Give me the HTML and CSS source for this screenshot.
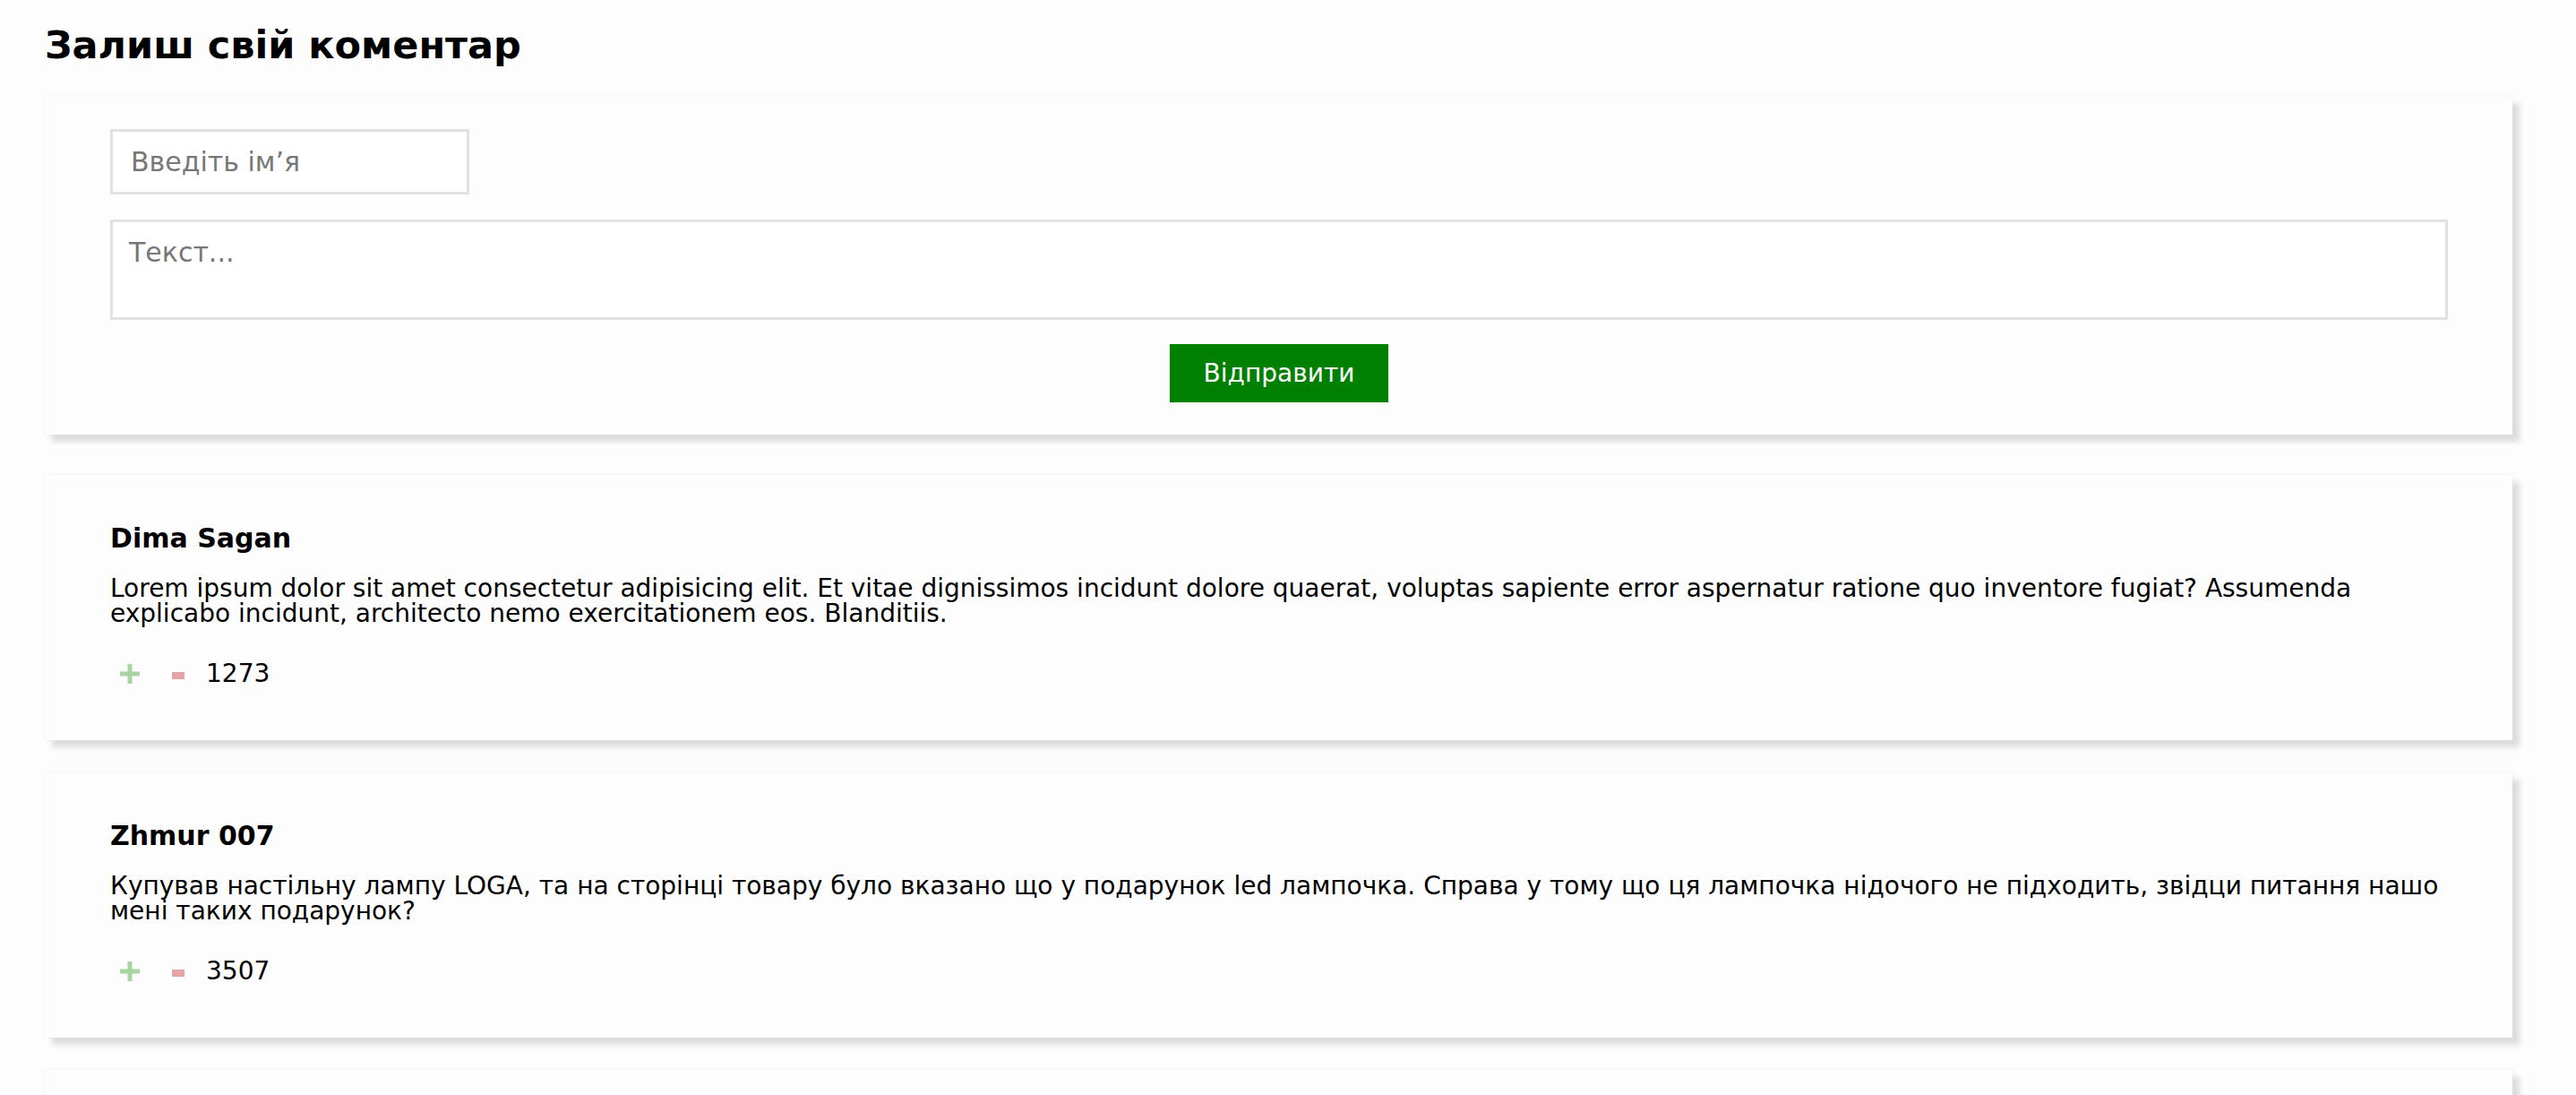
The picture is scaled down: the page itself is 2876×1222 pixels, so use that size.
FILE: index.html
```html
<!DOCTYPE html>
<html lang="uk">
<head>
<meta charset="utf-8">
<title>Коментарі</title>
<link rel="stylesheet" href="styles.css">
</head>
<body>
<main class="page">
  <h2 class="title">Залиш свій коментар</h2>

  <form class="card form-card">
    <input class="name-input" type="text" placeholder="Введіть ім’я">
    <textarea class="text-input" placeholder="Текст..."></textarea>
    <button class="send-btn" type="button">Відправити</button>
  </form>

  <section class="comments">
    <article class="card comment">
      <h3 class="comment-author">Dima Sagan</h3>
      <p class="comment-text">Lorem ipsum dolor sit amet consectetur adipisicing elit. Et vitae dignissimos incidunt dolore quaerat, voluptas sapiente error aspernatur ratione quo inventore fugiat? Assumenda explicabo incidunt, architecto nemo exercitationem eos. Blanditiis.</p>
      <div class="votes">
        <svg class="vote-plus" width="22" height="22" viewBox="0 0 22 22"><path d="M8.5 0h5v8.5H22v5h-8.5V22h-5v-8.5H0v-5h8.5z" fill="#a7d4a0"/></svg>
        <svg class="vote-minus" width="14" height="8" viewBox="0 0 14 8"><rect width="14" height="8" fill="#e6a3a3"/></svg>
        <span class="vote-count">1273</span>
      </div>
    </article>

    <article class="card comment">
      <h3 class="comment-author">Zhmur 007</h3>
      <p class="comment-text">Купував настільну лампу LOGA, та на сторінці товару було вказано що у подарунок led лампочка. Справа у тому що ця лампочка нідочого не підходить, звідци питання нашо мені таких подарунок?</p>
      <div class="votes">
        <svg class="vote-plus" width="22" height="22" viewBox="0 0 22 22"><path d="M8.5 0h5v8.5H22v5h-8.5V22h-5v-8.5H0v-5h8.5z" fill="#a7d4a0"/></svg>
        <svg class="vote-minus" width="14" height="8" viewBox="0 0 14 8"><rect width="14" height="8" fill="#e6a3a3"/></svg>
        <span class="vote-count">3507</span>
      </div>
    </article>

    <article class="card comment comment-next" aria-hidden="true"></article>
  </section>
</main>
</body>
</html>
```
FILE: styles.css
```css
* { box-sizing: border-box; }

html, body {
  margin: 0;
  background: #fdfdfd;
}

body {
  font-family: "DejaVu Sans", "Noto Sans", sans-serif;
  color: #000;
}

.page {
  padding: 25px 71px 0 50px;
}

.title {
  margin: 0 0 33px;
  font-size: 43px;
  line-height: 50px;
  font-weight: 700;
}

.card {
  background: #fdfdfd;
  box-shadow: 8px 8px 6px #dcdcdc, 0 0 3px #e9e9e9;
}

.form-card {
  display: flex;
  flex-direction: column;
  align-items: flex-start;
  padding: 36px 72px 36px 73px;
  margin: 0 0 45px;
}

.name-input,
.text-input {
  font-family: "DejaVu Sans", "Noto Sans", sans-serif;
  font-size: 30px;
  color: #000;
  background: #fff;
  border: 3px solid #e2e2e2;
  border-radius: 0;
  outline: none;
  margin: 0;
}

.name-input {
  width: 401px;
  height: 73px;
  padding: 0 20px;
}

.text-input {
  width: 100%;
  height: 112px;
  margin-top: 28px;
  padding: 16px 18px;
  resize: none;
  line-height: normal;
}

.name-input::placeholder,
.text-input::placeholder {
  color: #777;
  opacity: 1;
}

.send-btn {
  align-self: center;
  margin-top: 27px;
  height: 65px;
  padding: 0 38px;
  border: none;
  border-radius: 0;
  background: #008000;
  color: #fff;
  font-family: "DejaVu Sans", "Noto Sans", sans-serif;
  font-size: 28px;
  cursor: pointer;
}

.comments {
  display: flex;
  flex-direction: column;
  gap: 36px;
}

.comment {
  padding: 53px 72px 56px 73px;
}

.comment-next {
  height: 296px;
}

.comment-author {
  margin: 0;
  font-size: 30px;
  line-height: 36px;
  font-weight: 700;
}

.comment-text {
  margin: 24px 0 0;
  font-size: 28px;
  line-height: 28px;
}

.votes {
  display: flex;
  align-items: center;
  height: 36px;
  margin-top: 35px;
  padding-left: 11px;
}

.vote-plus {
  display: block;
  flex: none;
}

.vote-minus {
  display: block;
  flex: none;
  margin-left: 36px;
  margin-top: 4px;
}

.vote-count {
  margin-left: 24px;
  font-size: 28px;
  line-height: 36px;
}
```
